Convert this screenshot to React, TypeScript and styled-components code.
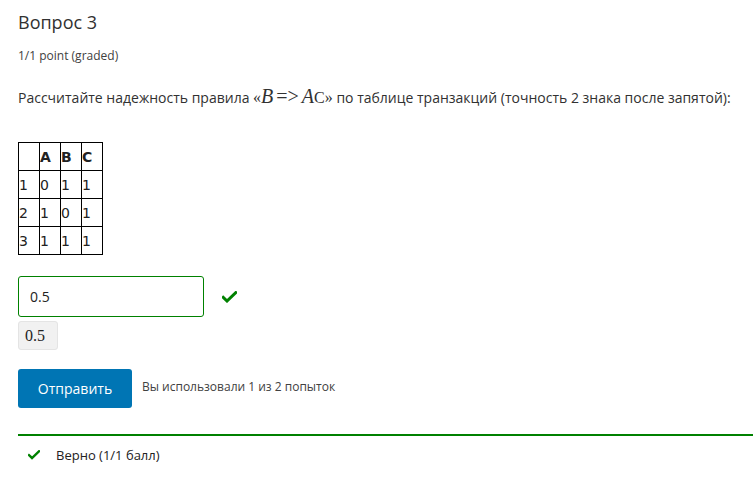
import React from "react";
import styled, { createGlobalStyle } from "styled-components";

const Global = createGlobalStyle`
  html, body { margin: 0; padding: 0; background: #fff; }
  body { font-family: "Open Sans", "Noto Sans", sans-serif; color: #313131; }
`;

const Page = styled.div`
  padding: 8px 0 0 18px;
  display: flex;
  flex-direction: column;
  align-items: flex-start;
`;

const Title = styled.h3`
  margin: 0;
  font-size: 18px;
  font-weight: 400;
  line-height: 28px;
  color: #313131;
`;

const Points = styled.div`
  margin-top: 12px;
  font-size: 12px;
  line-height: 16px;
  color: #414141;
`;

const Question = styled.p`
  margin: 22px 0 0;
  font-size: 14px;
  line-height: 20px;
  color: #313131;
`;

const MathItalic = styled.span`
  font-family: "Liberation Serif", "DejaVu Serif", serif;
  font-style: italic;
  font-size: 20px;
`;

const MathUp = styled.span<{ size?: number; gap?: number }>`
  font-family: "Liberation Serif", "DejaVu Serif", serif;
  font-size: ${(p) => p.size ?? 16}px;
  margin: 0 ${(p) => p.gap ?? 0}px;
`;

const Table = styled.table`
  margin-top: 34px;
  border-collapse: collapse;
  font-family: "DejaVu Sans", Verdana, sans-serif;
  font-size: 14px;
  color: #222;
`;

const Cell = styled.td<{ head?: boolean }>`
  border: 1px solid #000;
  width: 20px;
  height: 27px;
  padding: 0;
  text-align: left;
  vertical-align: middle;
  font-weight: ${(p) => (p.head ? 700 : 400)};
`;

const AnswerRow = styled.div`
  margin-top: 21px;
  display: flex;
  align-items: center;
`;

const Input = styled.div`
  box-sizing: border-box;
  width: 186px;
  height: 41px;
  border: 1px solid #008100;
  border-radius: 3px;
  padding: 0 11px;
  display: flex;
  align-items: center;
  font-size: 14px;
  color: #222;
`;

const CheckWrap = styled.span<{ ml: number }>`
  display: inline-flex;
  margin-left: ${(p) => p.ml}px;
  color: #008100;
`;

const Preview = styled.div`
  margin-top: 4px;
  box-sizing: border-box;
  width: 40px;
  height: 29px;
  background: #f1f1f1;
  border: 1px solid #e4e4e4;
  border-radius: 3px;
  display: flex;
  align-items: center;
  padding-left: 6px;
  color: #222;
`;

const SubmitRow = styled.div`
  margin-top: 19px;
  display: flex;
  align-items: center;
`;

const Button = styled.button`
  width: 114px;
  height: 39px;
  background: #0075b4;
  color: #fff;
  border: none;
  border-radius: 3px;
  font-family: "Open Sans", "Noto Sans", sans-serif;
  font-size: 14px;
  padding: 0;
`;

const Attempts = styled.span`
  margin-left: 10px;
  font-size: 12px;
  color: #414141;
  margin-top: -4px;
`;

const Result = styled.div`
  align-self: stretch;
  margin-top: 26px;
  border-top: 2px solid #008100;
  padding: 10px 0 0 10px;
  display: flex;
  align-items: center;
  font-size: 13px;
  color: #222;
`;

const ResultText = styled.span`
  margin-left: 16px;
`;

const Check = ({ size = 15 }: { size?: number }) => (
  <svg width={size} height={size * 0.8} viewBox="0 0 15 12">
    <path d="M1.2 6.4 L5 10 L13.8 1.6" fill="none" stroke="currentColor" strokeWidth="3" strokeLinecap="square" />
  </svg>
);

const rows = [
  ["1", "0", "1", "1"],
  ["2", "1", "0", "1"],
  ["3", "1", "1", "1"],
];

export default function App() {
  return (
    <>
      <Global />
      <Page>
        <Title>Вопрос 3</Title>
        <Points>1/1 point (graded)</Points>
        <Question>
          Рассчитайте надежность правила <MathUp>«</MathUp>
          <MathItalic>B</MathItalic>
          <MathUp size={20} gap={3}>=&gt;</MathUp>
          <MathItalic>A</MathItalic>
          <MathUp>C»</MathUp> по таблице транзакций (точность 2 знака после запятой):
        </Question>
        <Table>
          <tbody>
            <tr>
              <Cell head></Cell>
              <Cell head>A</Cell>
              <Cell head>B</Cell>
              <Cell head>C</Cell>
            </tr>
            {rows.map((r) => (
              <tr key={r[0]}>
                {r.map((c, i) => (
                  <Cell key={i}>{c}</Cell>
                ))}
              </tr>
            ))}
          </tbody>
        </Table>
        <AnswerRow>
          <Input>0.5</Input>
          <CheckWrap ml={18}>
            <Check />
          </CheckWrap>
        </AnswerRow>
        <Preview>
          <MathUp>0.5</MathUp>
        </Preview>
        <SubmitRow>
          <Button>Отправить</Button>
          <Attempts>Вы использовали 1 из 2 попыток</Attempts>
        </SubmitRow>
        <Result>
          <CheckWrap ml={0}>
            <Check size={12} />
          </CheckWrap>
          <ResultText>Верно (1/1 балл)</ResultText>
        </Result>
      </Page>
    </>
  );
}
